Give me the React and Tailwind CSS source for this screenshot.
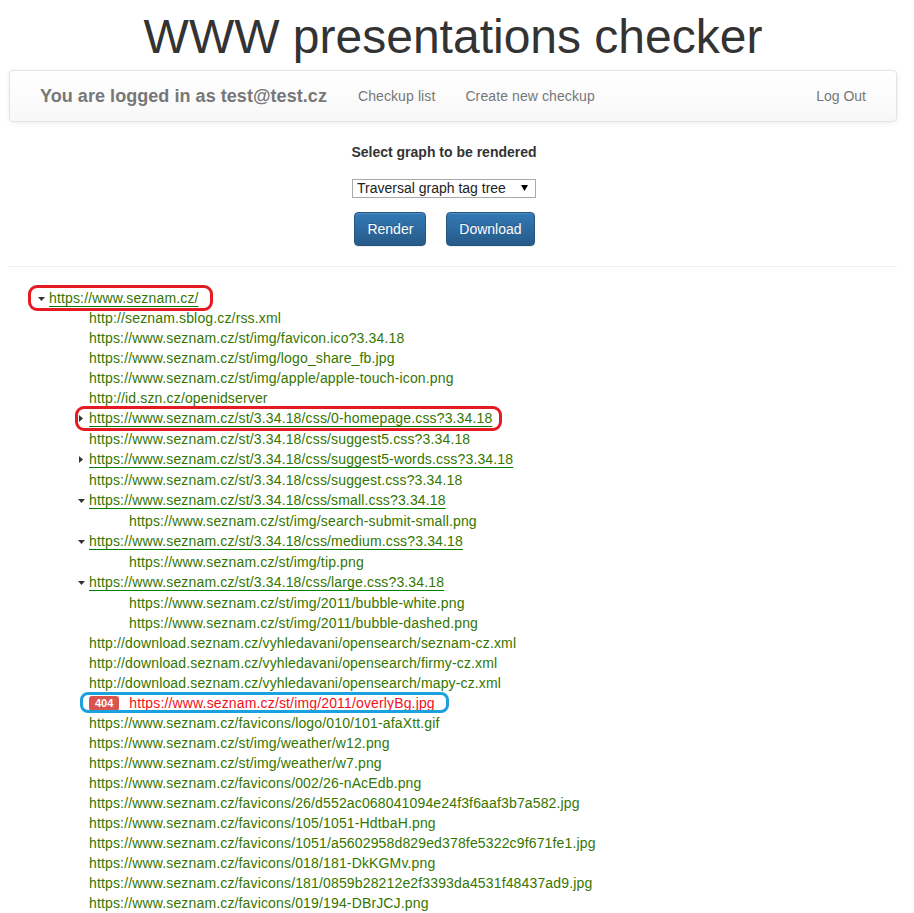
import React from "react";

const rows = [
  { l: 0, t: "https://www.seznam.cz/", tog: "down", ann: "r0" },
  { l: 1, t: "http://seznam.sblog.cz/rss.xml" },
  { l: 1, t: "https://www.seznam.cz/st/img/favicon.ico?3.34.18" },
  { l: 1, t: "https://www.seznam.cz/st/img/logo_share_fb.jpg" },
  { l: 1, t: "https://www.seznam.cz/st/img/apple/apple-touch-icon.png" },
  { l: 1, t: "http://id.szn.cz/openidserver" },
  { l: 1, t: "https://www.seznam.cz/st/3.34.18/css/0-homepage.css?3.34.18", tog: "right", ann: "r1" },
  { l: 1, t: "https://www.seznam.cz/st/3.34.18/css/suggest5.css?3.34.18" },
  { l: 1, t: "https://www.seznam.cz/st/3.34.18/css/suggest5-words.css?3.34.18", tog: "right" },
  { l: 1, t: "https://www.seznam.cz/st/3.34.18/css/suggest.css?3.34.18" },
  { l: 1, t: "https://www.seznam.cz/st/3.34.18/css/small.css?3.34.18", tog: "down" },
  { l: 2, t: "https://www.seznam.cz/st/img/search-submit-small.png" },
  { l: 1, t: "https://www.seznam.cz/st/3.34.18/css/medium.css?3.34.18", tog: "down" },
  { l: 2, t: "https://www.seznam.cz/st/img/tip.png" },
  { l: 1, t: "https://www.seznam.cz/st/3.34.18/css/large.css?3.34.18", tog: "down" },
  { l: 2, t: "https://www.seznam.cz/st/img/2011/bubble-white.png" },
  { l: 2, t: "https://www.seznam.cz/st/img/2011/bubble-dashed.png" },
  { l: 1, t: "http://download.seznam.cz/vyhledavani/opensearch/seznam-cz.xml" },
  { l: 1, t: "http://download.seznam.cz/vyhledavani/opensearch/firmy-cz.xml" },
  { l: 1, t: "http://download.seznam.cz/vyhledavani/opensearch/mapy-cz.xml" },
  { l: 1, t: "https://www.seznam.cz/st/img/2011/overlyBg.jpg", badge: "404", ann: "b" },
  { l: 1, t: "https://www.seznam.cz/favicons/logo/010/101-afaXtt.gif" },
  { l: 1, t: "https://www.seznam.cz/st/img/weather/w12.png" },
  { l: 1, t: "https://www.seznam.cz/st/img/weather/w7.png" },
  { l: 1, t: "https://www.seznam.cz/favicons/002/26-nAcEdb.png" },
  { l: 1, t: "https://www.seznam.cz/favicons/26/d552ac068041094e24f3f6aaf3b7a582.jpg" },
  { l: 1, t: "https://www.seznam.cz/favicons/105/1051-HdtbaH.png" },
  { l: 1, t: "https://www.seznam.cz/favicons/1051/a5602958d829ed378fe5322c9f671fe1.jpg" },
  { l: 1, t: "https://www.seznam.cz/favicons/018/181-DkKGMv.png" },
  { l: 1, t: "https://www.seznam.cz/favicons/181/0859b28212e2f3393da4531f48437ad9.jpg" },
  { l: 1, t: "https://www.seznam.cz/favicons/019/194-DBrJCJ.png" },
];

const indent = { 0: "pl-[29px]", 1: "pl-[69px]", 2: "pl-[109px]" };

const annClass = {
  r0: "absolute left-[-10px] right-[-14px] top-[-3px] bottom-[-3px] rounded-[9px] border-[3px] border-[#e41b23] pointer-events-none",
  r1: "absolute left-[-3px] right-[-10px] top-[-2px] bottom-[-3px] rounded-[9px] border-[3px] border-[#e41b23] pointer-events-none",
  b: "absolute left-[2px] right-[-14px] top-[-1px] bottom-[0px] rounded-[8px] border-[3px] border-[#1ba1dd] pointer-events-none",
};

function Toggle({ dir }) {
  if (dir === "down")
    return (
      <svg width="7" height="4" viewBox="0 0 7 4" className="mt-[1px]">
        <path d="M0 0H7L3.5 4Z" fill="#333" />
      </svg>
    );
  if (dir === "right")
    return (
      <svg width="4" height="7" viewBox="0 0 4 7" className="ml-[1px]">
        <path d="M0 0L4 3.5L0 7Z" fill="#333" />
      </svg>
    );
  return null;
}

function Row({ r, i }) {
  const extra = r.tog && i > 0 ? "mb-[1px]" : "";
  return (
    <div className={`flex h-[20px] items-stretch ${indent[r.l]} ${extra}`}>
      <div className="relative flex items-center">
        {r.ann && <span className={annClass[r.ann]} />}
        <span className="flex w-[11px] items-center">
          <Toggle dir={r.tog} />
        </span>
        {r.badge ? (
          <>
            <span className="rounded-[3px] bg-[#d9534f] px-[6px] pt-[1px] pb-[2px] text-[11px] font-bold leading-[12px] text-white">
              {r.badge}
            </span>
            <span className="ml-[10px] text-[14px] tracking-[0.15px] text-[#f2101a]">{r.t}</span>
          </>
        ) : (
          <span
            className={`text-[14px] tracking-[0.15px] text-[#357600] ${
              r.tog ? "underline decoration-[#008000] underline-offset-[3px]" : ""
            }`}
          >
            {r.t}
          </span>
        )}
      </div>
    </div>
  );
}

export default function App() {
  return (
    <div
      className="min-h-screen bg-white pl-[9px] pr-[17px] text-[14px] leading-[20px] text-[#333]"
      style={{ fontFamily: '"Liberation Sans", Arial, Helvetica, sans-serif' }}
    >
      <h1 className="mt-[10px] text-center text-[48px] font-normal leading-[53px] text-[#333]">
        WWW presentations checker
      </h1>

      <nav className="mt-[7px] flex h-[52px] items-center rounded-[4px] border border-[#e3e3e3] bg-gradient-to-b from-white to-[#f8f8f8] px-[15px] shadow-[inset_0_1px_0_rgba(255,255,255,0.15),0_1px_5px_rgba(0,0,0,0.075)]">
        <span className="px-[15px] text-[18px] font-bold leading-[20px] tracking-[0.05px] text-[#777]">
          You are logged in as test@test.cz
        </span>
        <a className="pl-[16px] pr-[15px] text-[14px] tracking-[0.1px] text-[#777]">Checkup list</a>
        <a className="px-[15px] text-[14px] tracking-[0.1px] text-[#777]">Create new checkup</a>
        <div className="flex-1" />
        <a className="px-[15px] text-[14px] text-[#777]">Log Out</a>
      </nav>

      <div className="mr-[18px] mt-[20px] flex flex-col items-center">
        <div className="text-[14px] font-bold leading-[20px] text-[#333]">
          Select graph to be rendered
        </div>
        <div className="relative mt-[16px] h-[19px] w-[184px]">
          <select className="h-[19px] w-[184px] appearance-none border border-[#a9a9a9] bg-white pl-[4px] text-[14px] leading-[17px] text-[#222] outline-none">
            <option>Traversal graph tag tree</option>
          </select>
          <svg
            width="7"
            height="6"
            viewBox="0 0 7 6"
            className="pointer-events-none absolute right-[8px] top-[7px]"
          >
            <path d="M0 0H7L3.5 6Z" fill="#000" />
          </svg>
        </div>
        <div className="mt-[15px] flex gap-[20px] pl-[1px]">
          <button className="h-[34px] rounded-[4px] border border-[#245580] bg-gradient-to-b from-[#337ab7] to-[#265a88] px-[12px] text-[14px] text-white shadow-[inset_0_1px_0_rgba(255,255,255,0.15),0_1px_1px_rgba(0,0,0,0.075)] [text-shadow:0_-1px_0_rgba(0,0,0,0.2)]">
            Render
          </button>
          <button className="h-[34px] rounded-[4px] border border-[#245580] bg-gradient-to-b from-[#337ab7] to-[#265a88] px-[12px] text-[14px] text-white shadow-[inset_0_1px_0_rgba(255,255,255,0.15),0_1px_1px_rgba(0,0,0,0.075)] [text-shadow:0_-1px_0_rgba(0,0,0,0.2)]">
            Download
          </button>
        </div>
      </div>

      <hr className="mt-[20px] border-0 border-t border-[#eee]" />

      <div className="mt-[21px] pb-[20px]">
        {rows.map((r, i) => (
          <Row key={i} r={r} i={i} />
        ))}
      </div>
    </div>
  );
}
